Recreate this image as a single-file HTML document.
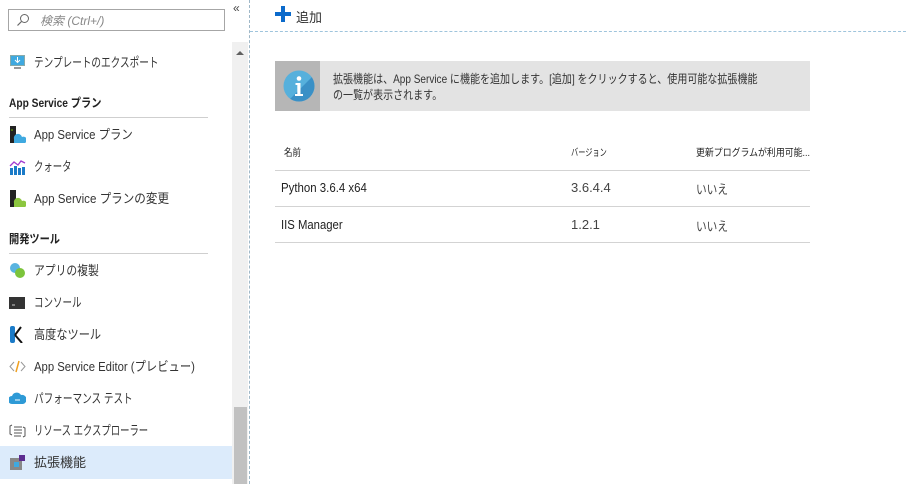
<!DOCTYPE html>
<html><head><meta charset="utf-8"><style>
*{margin:0;padding:0;box-sizing:border-box}
body{width:906px;height:484px;overflow:hidden;background:#fff;font-family:"Liberation Sans","Noto Sans CJK JP",sans-serif;color:#222;position:relative}
.a{position:absolute;white-space:nowrap}
.it,.h,.th,.td{transform-origin:0 50%;white-space:nowrap}
.it{position:absolute;left:34px;font-size:13px;color:#333;line-height:16px}
.ic{position:absolute;left:9px;width:17px;height:17px}
.h{position:absolute;left:9px;font-size:12px;font-weight:bold;color:#222;line-height:16px}
.sep{position:absolute;left:9px;width:199px;height:1px;background:#cfcfcf}
.th{position:absolute;font-size:10px;color:#222;top:144px}
.td{position:absolute;font-size:13px;color:#222}
.hl{position:absolute;left:275px;width:535px;height:1px;background:#d3d3d3}
</style></head><body>
<div class="a" style="left:8px;top:9px;width:217px;height:22px;border:1px solid #a6a6a6"></div>
<svg class="a" style="left:16px;top:13px" width="14" height="14"><circle cx="8.5" cy="5.5" r="4" fill="none" stroke="#666" stroke-width="1"/><line x1="5.5" y1="8.5" x2="1.5" y2="12.5" stroke="#666" stroke-width="1.2"/></svg>
<div class="a" style="left:40px;top:12px;font-size:12px;font-style:italic;color:#888">検索 (Ctrl+/)</div>
<div class="a" style="left:233px;top:1px;font-size:12px;color:#444">«</div>
<div class="a" style="left:232px;top:42px;width:16px;height:442px;background:#f0f0f0"></div>
<div class="a" style="left:236px;top:51px;width:0;height:0;border-left:4px solid transparent;border-right:4px solid transparent;border-bottom:4px solid #606060"></div>
<div class="a" style="left:234px;top:407px;width:13px;height:77px;background:#c1c1c1"></div>
<div class="a" style="left:249px;top:0;width:0;height:484px;border-left:1px dashed #9fb8c8"></div>

<svg class="ic" style="top:54px" viewBox="0 0 17 17"><rect x="1" y="1" width="15" height="11" fill="#8aa"/><rect x="2" y="2" width="13" height="9" fill="#3fa9e0"/><path d="M8.5 3v5M6 6l2.5 2.5L11 6" stroke="#fff" fill="none"/><rect x="5" y="13" width="7" height="2" fill="#999"/></svg>
<div class="it" style="top:55px;transform:scaleX(.74)">テンプレートのエクスポート</div>
<div class="h" style="top:95px;transform:scaleX(.85)">App Service プラン</div>
<div class="sep" style="top:117px"></div>
<svg class="ic" style="top:126px" viewBox="0 0 17 17"><rect x="1" y="0" width="6" height="17" fill="#222"/><circle cx="3" cy="4" r=".8" fill="#7c0"/><path d="M5 17v-4a4 4 0 0 1 8-2 3 3 0 0 1 3 6z" fill="#3fa9e0"/></svg>
<div class="it" style="top:127px;transform:scaleX(.876)">App Service プラン</div>
<svg class="ic" style="top:158px" viewBox="0 0 17 17"><path d="M1 8l4-4 4 3 3-4 4 2" stroke="#a23bd0" fill="none" stroke-width="1.3"/><rect x="1" y="10" width="3" height="7" fill="#1b7bc8"/><rect x="5" y="8" width="3" height="9" fill="#1b7bc8"/><rect x="9" y="10" width="3" height="7" fill="#1b7bc8"/><rect x="13" y="9" width="3" height="8" fill="#1b7bc8"/></svg>
<div class="it" style="top:159px;transform:scaleX(.72)">クォータ</div>
<svg class="ic" style="top:190px" viewBox="0 0 17 17"><rect x="1" y="0" width="6" height="17" fill="#222"/><path d="M5 17v-4a4 4 0 0 1 8-2 3 3 0 0 1 3 6z" fill="#8cc63f"/></svg>
<div class="it" style="top:191px;transform:scaleX(.89)">App Service プランの変更</div>
<div class="h" style="top:231px;transform:scaleX(.85)">開発ツール</div>
<div class="sep" style="top:253px"></div>
<svg class="ic" style="top:262px" viewBox="0 0 17 17"><circle cx="6" cy="6" r="5" fill="#5ab4e0"/><circle cx="11" cy="11" r="5" fill="#7cc43c"/></svg>
<div class="it" style="top:263px;transform:scaleX(.83)">アプリの複製</div>
<svg class="ic" style="top:294px" viewBox="0 0 17 17"><rect x="0" y="3" width="16" height="12" fill="#333"/><path d="M3 11h3" stroke="#ccc"/></svg>
<div class="it" style="top:295px;transform:scaleX(.73)">コンソール</div>
<svg class="ic" style="top:326px" viewBox="0 0 17 17"><rect x="1" y="0" width="5" height="17" rx="2" fill="#1b7bc8"/><path d="M6 9l6-8M6 9l7 8" stroke="#111" stroke-width="2" fill="none"/></svg>
<div class="it" style="top:327px;transform:scaleX(.86)">高度なツール</div>
<svg class="ic" style="top:358px" viewBox="0 0 17 17"><path d="M5 4L1 8.5 5 13M12 4l4 4.5-4 4.5" stroke="#999" fill="none"/><path d="M10 3L7 14" stroke="#f0a020" stroke-width="1.5"/></svg>
<div class="it" style="top:359px;transform:scaleX(.87)">App Service Editor (プレビュー)</div>
<svg class="ic" style="top:390px" viewBox="0 0 17 17"><path d="M3 14a4 4 0 0 1 0-8 5 5 0 0 1 9-1 4 4 0 0 1 2 9z" fill="#2e9ad6"/><path d="M6 10h5" stroke="#fff"/></svg>
<div class="it" style="top:391px;transform:scaleX(.74)">パフォーマンス テスト</div>
<svg class="ic" style="top:422px" viewBox="0 0 17 17"><path d="M3 3L1 4v8l2 1M14 5l2 1v8l-2 1M5 5h8M5 8h8M5 11h8M5 14h7" stroke="#555" fill="none"/></svg>
<div class="it" style="top:423px;transform:scaleX(.72)">リソース エクスプローラー</div>
<div class="a" style="left:0;top:446px;width:232px;height:33px;background:#dcebfb"></div>
<svg class="ic" style="top:454px" viewBox="0 0 17 17"><rect x="1" y="4" width="12" height="12" fill="#888"/><rect x="5" y="8" width="5" height="5" fill="#3fa9e0"/><rect x="10" y="1" width="6" height="6" fill="#5c2d91"/></svg>
<div class="it" style="top:455px">拡張機能</div>

<svg class="a" style="left:275px;top:6px" width="16" height="16"><rect x="6" y="0" width="4" height="16" fill="#0b6acb"/><rect x="0" y="6" width="16" height="4" fill="#0b6acb"/></svg>
<div class="a" style="left:296px;top:7px;font-size:13px;color:#333">追加</div>
<div class="a" style="left:250px;top:31px;width:656px;border-top:1px dashed #9fc4dc"></div>

<div class="a" style="left:275px;top:61px;width:535px;height:50px;background:#e3e3e3"></div>
<div class="a" style="left:275px;top:61px;width:45px;height:50px;background:#b6b6b6"></div>
<svg class="a" style="left:283px;top:70px" width="32" height="32"><defs><clipPath id="c"><circle cx="16" cy="16" r="15.5"/></clipPath></defs><circle cx="16" cy="16" r="15.5" fill="#56b0dc"/><path d="M32 4L32 32 4 32z" fill="#3a90c6" clip-path="url(#c)"/><circle cx="16" cy="8.5" r="2.3" fill="#fff"/><path d="M12.5 13h5v11h2.5v2h-8v-2h2.3v-9h-1.8z" fill="#fff"/></svg>
<div class="a" style="left:333px;top:71px;font-size:12px;line-height:16px;color:#333;transform:scaleX(.835);transform-origin:0 0">拡張機能は、App Service に機能を追加します。[追加] をクリックすると、使用可能な拡張機能<br>の一覧が表示されます。</div>

<div class="th" style="left:284px;transform:scaleX(.85)">名前</div>
<div class="th" style="left:571px;transform:scaleX(.72)">バージョン</div>
<div class="th" style="left:696px;transform:scaleX(.89)">更新プログラムが利用可能...</div>
<div class="hl" style="top:170px"></div>
<div class="td" style="left:281px;top:180px;transform:scaleX(.88)">Python 3.6.4 x64</div>
<div class="td" style="left:571px;top:180px;color:#444">3.6.4.4</div>
<div class="td" style="left:696px;top:179px;color:#444;transform:scaleX(.82)">いいえ</div>
<div class="hl" style="top:206px"></div>
<div class="td" style="left:281px;top:217px;transform:scaleX(.87)">IIS Manager</div>
<div class="td" style="left:571px;top:217px;color:#444">1.2.1</div>
<div class="td" style="left:696px;top:216px;color:#444;transform:scaleX(.82)">いいえ</div>
<div class="hl" style="top:242px"></div>
</body></html>
